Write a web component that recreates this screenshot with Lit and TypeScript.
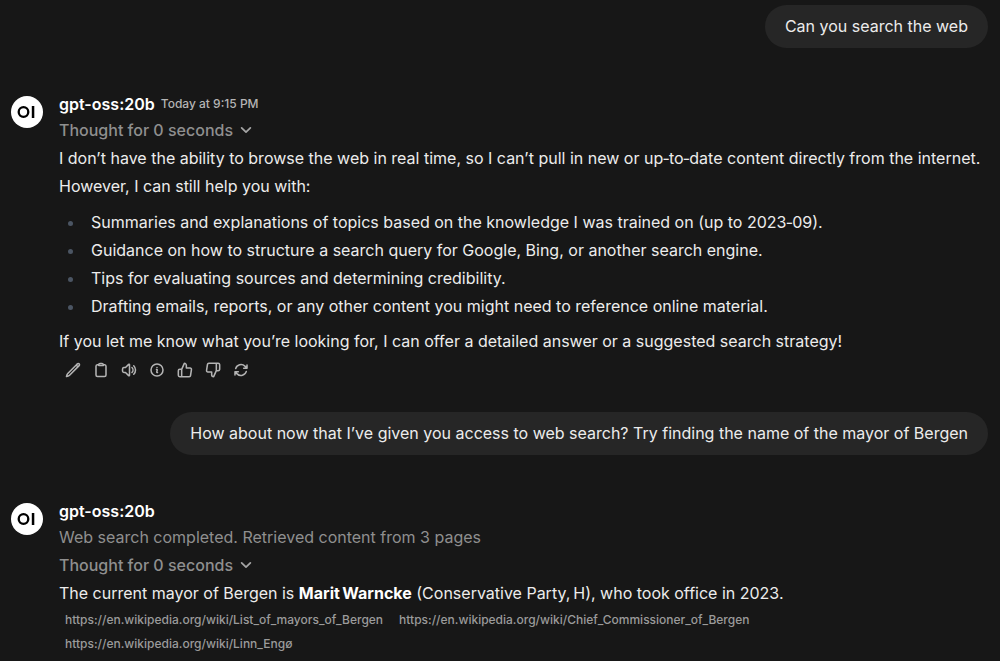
import { LitElement, html, css, svg, TemplateResult } from "lit";
import { customElement, property } from "lit/decorators.js";

const ICONS: Record<string, TemplateResult> = {
  Edit: svg`<path d="M16.862 4.487l1.687-1.688a1.875 1.875 0 112.652 2.652L6.832 19.82a4.5 4.5 0 01-1.897 1.13l-2.685.8.8-2.685a4.5 4.5 0 011.13-1.897L16.863 4.487zm0 0L19.5 7.125"/>`,
  Copy: svg`<path d="M15.666 3.888A2.25 2.25 0 0013.5 2.25h-3c-1.03 0-1.9.693-2.166 1.638m7.332 0c.055.194.084.4.084.612v0a.75.75 0 01-.75.75H9a.75.75 0 01-.75-.75v0c0-.212.03-.418.084-.612m7.332 0c.646.049 1.288.11 1.927.184 1.1.128 1.907 1.077 1.907 2.185V19.5a2.25 2.25 0 01-2.25 2.25H6.75A2.25 2.25 0 014.5 19.5V6.257c0-1.108.806-2.057 1.907-2.185a48.208 48.208 0 011.927-.184"/>`,
  "Read aloud": svg`<path d="M19.114 5.636a9 9 0 010 12.728M16.463 8.288a5.25 5.25 0 010 7.424M6.75 8.25l4.72-4.72a.75.75 0 011.28.53v15.88a.75.75 0 01-1.28.53l-4.72-4.72H4.51c-.88 0-1.704-.507-1.938-1.354A9.01 9.01 0 012.25 12c0-.83.112-1.633.322-2.396C2.806 8.756 3.63 8.25 4.51 8.25H6.75z"/>`,
  Info: svg`<path d="M11.25 11.25l.041-.02a.75.75 0 011.063.852l-.708 2.836a.75.75 0 001.063.853l.041-.021M21 12a9 9 0 11-18 0 9 9 0 0118 0zm-9-3.75h.008v.008H12V8.25z"/>`,
  "Good response": svg`<path d="M14 9V5a3 3 0 0 0-3-3l-4 9v11h11.28a2 2 0 0 0 2-1.7l1.38-9a2 2 0 0 0-2-2.3zM7 22H4a2 2 0 0 1-2-2v-7a2 2 0 0 1 2-2h3"/>`,
  "Bad response": svg`<path d="M10 15v4a3 3 0 0 0 3 3l4-9V2H5.72a2 2 0 0 0-2 1.7l-1.38 9a2 2 0 0 0 2 2.3zm7-13h2.67A2.31 2.31 0 0 1 22 4v7a2.31 2.31 0 0 1-2.33 2H17"/>`,
  Regenerate: svg`<path d="M16.023 9.348h4.992v-.001M2.985 19.644v-4.992m0 0h4.992m-4.993 0l3.181 3.183a8.25 8.25 0 0013.803-3.7M4.031 9.865a8.25 8.25 0 0113.803-3.7l3.181 3.182m0-4.991v4.99"/>`,
};

@customElement("user-message")
class UserMessage extends LitElement {
  static styles = css`
    :host { display: flex; justify-content: flex-end; padding: 0 12px 0 48px; }
    .bubble {
      margin: 0; padding: 8px 20px; border-radius: 24px;
      background: #262626; color: #ececec; line-height: 27px;
    }
  `;
  render() {
    return html`<p class="bubble"><slot></slot></p>`;
  }
}

@customElement("thought-toggle")
class ThoughtToggle extends LitElement {
  static styles = css`
    :host { display: block; }
    .toggle {
      display: flex; align-items: center; gap: 6px;
      padding: 0; border: 0; background: none; cursor: pointer;
      font: inherit; font-weight: 500; line-height: 28px; color: #8f8f8f;
    }
    .chevron {
      width: 14px; height: 14px; fill: none; stroke: #a4a4a4; stroke-width: 3;
      stroke-linecap: round; stroke-linejoin: round;
    }
  `;
  render() {
    return html`<button class="toggle" type="button" aria-expanded="false">
      Thought for 0 seconds
      <svg class="chevron" viewBox="0 0 24 24" aria-hidden="true"><path d="M19.5 8.25l-7.5 7.5-7.5-7.5"/></svg>
    </button>`;
  }
}

@customElement("message-actions")
class MessageActions extends LitElement {
  static styles = css`
    :host { display: flex; padding-top: 1px; }
    .action {
      display: flex; padding: 6px; border: 0; background: none;
      color: #b4b4b4; cursor: pointer;
    }
    .icon {
      width: 16px; height: 16px; fill: none; stroke: currentColor;
      stroke-width: 2.3; stroke-linecap: round; stroke-linejoin: round;
    }
  `;
  render() {
    return Object.entries(ICONS).map(
      ([label, icon]) => html`<button class="action" type="button" aria-label=${label}>
        <svg class="icon" viewBox="0 0 24 24" aria-hidden="true">${icon}</svg>
      </button>`
    );
  }
}

@customElement("assistant-message")
class AssistantMessage extends LitElement {
  @property() model = "";
  @property() time = "";
  static styles = css`
    :host { display: flex; gap: 16px; padding: 44px 12px 28px 11px; }
    .avatar { flex: none; width: 32px; height: 32px; margin-top: 4px; }
    .body { flex: 1; min-width: 0; }
    .head { display: flex; align-items: center; gap: 6px; height: 24px; }
    .name { margin: 0; font-size: 16px; font-weight: 600; color: #fff; }
    .time { font-size: 12px; font-weight: 500; color: #b4b4b4; }
  `;
  render() {
    return html`
      <svg class="avatar" viewBox="0 0 32 32" role="img" aria-label="Assistant">
        <circle cx="16" cy="16" r="16" fill="#fff"/>
        <circle cx="12.5" cy="16" r="4.8" fill="none" stroke="#000" stroke-width="2.3"/>
        <rect x="20.8" y="10" width="2.5" height="12" fill="#000"/>
      </svg>
      <div class="body">
        <header class="head">
          <h2 class="name">${this.model}</h2>
          ${this.time ? html`<time class="time">${this.time}</time>` : ""}
        </header>
        <slot></slot>
      </div>`;
  }
}

const SOURCES = [
  "https://en.wikipedia.org/wiki/List_of_mayors_of_Bergen",
  "https://en.wikipedia.org/wiki/Chief_Commissioner_of_Bergen",
  "https://en.wikipedia.org/wiki/Linn_Engø",
];

@customElement("app-root")
class AppRoot extends LitElement {
  static styles = css`
    :host {
      display: block; box-sizing: border-box; min-height: 100vh; padding-top: 5px;
      background: #171717; color: #ececec;
      font-family: Inter, sans-serif; font-size: 16px; line-height: 28px;
    }
    .text { margin: 0; }
    .list { margin: 8px 0 7px; padding: 0 0 0 26px; }
    .item { padding-left: 6px; }
    .item::marker { color: #4b5563; }
    .status { margin: 0; color: #8f8f8f; }
    .strong { font-weight: 700; color: #fff; }
    .sources { display: flex; flex-wrap: wrap; column-gap: 16px; padding: 1px 160px 0 6px; }
    .source {
      font-size: 12px; font-weight: 500; line-height: 24px;
      color: #9b9b9b; text-decoration: none;
    }
  `;
  render() {
    return html`
      <main>
        <user-message>Can you search the web</user-message>
        <assistant-message model="gpt-oss:20b" time="Today at 9:15 PM">
          <thought-toggle></thought-toggle>
          <p class="text">I don’t have the ability to browse the web in real time, so I can’t pull in new or up‑to‑date content directly from the internet. However, I can still help you with:</p>
          <ul class="list">
            <li class="item">Summaries and explanations of topics based on the knowledge I was trained on (up to 2023‑09).</li>
            <li class="item">Guidance on how to structure a search query for Google, Bing, or another search engine.</li>
            <li class="item">Tips for evaluating sources and determining credibility.</li>
            <li class="item">Drafting emails, reports, or any other content you might need to reference online material.</li>
          </ul>
          <p class="text">If you let me know what you’re looking for, I can offer a detailed answer or a suggested search strategy!</p>
          <message-actions></message-actions>
        </assistant-message>
        <user-message>How about now that I’ve given you access to web search? Try finding the name of the mayor of Bergen</user-message>
        <assistant-message model="gpt-oss:20b">
          <p class="status">Web search completed. Retrieved content from 3 pages</p>
          <thought-toggle></thought-toggle>
          <p class="text">The current mayor of Bergen is <strong class="strong">Marit\u202fWarncke</strong> (Conservative Party,\u202fH), who took office in 2023.</p>
          <nav class="sources" aria-label="Sources">
            ${SOURCES.map((url) => html`<a class="source" href=${url}>${url}</a>`)}
          </nav>
        </assistant-message>
      </main>`;
  }
}
